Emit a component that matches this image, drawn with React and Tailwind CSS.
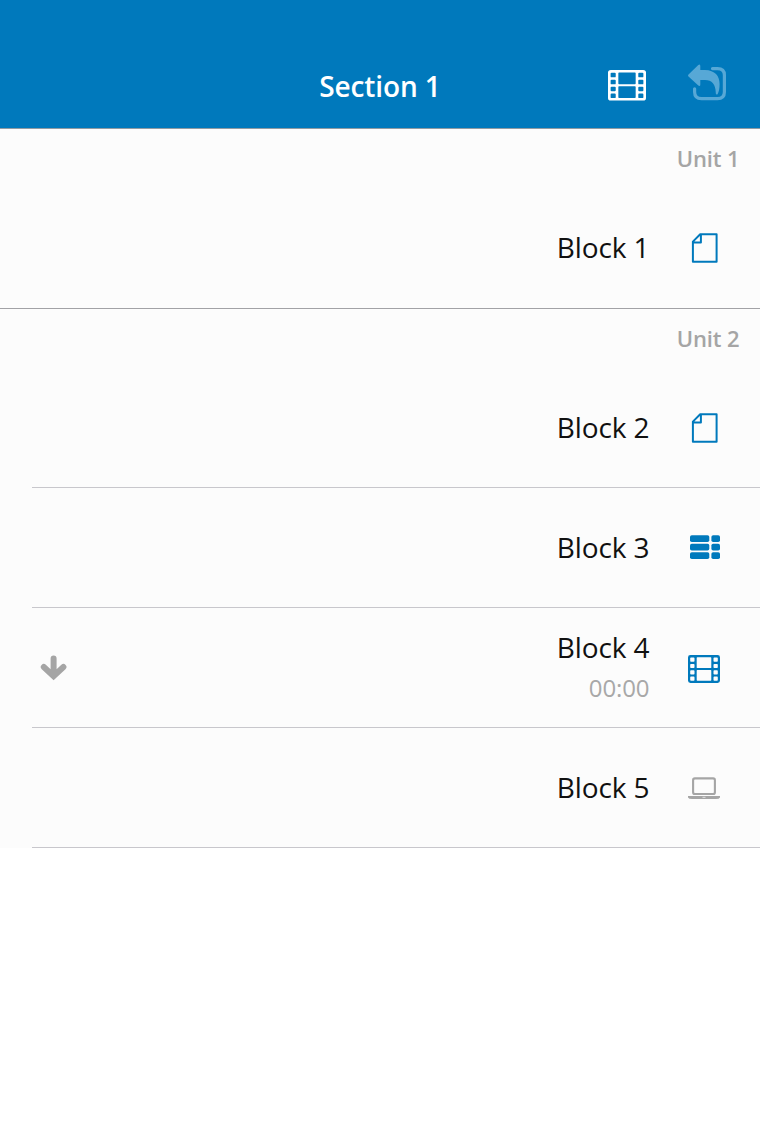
function rr(x, y, w, h, r) {
  return `M${x + r} ${y}h${w - 2 * r}a${r} ${r} 0 0 1 ${r} ${r}v${h - 2 * r}a${r} ${r} 0 0 1 ${-r} ${r}h${-(w - 2 * r)}a${r} ${r} 0 0 1 ${-r} ${-r}v${-(h - 2 * r)}a${r} ${r} 0 0 1 ${r} ${-r}z`;
}

const FILM = [
  rr(0, 0, 32, 28, 2.4),
  ...[2.5, 8.9, 15.3, 21.6].flatMap((y) => [rr(2.2, y, 4.3, 4.2, 0.8), rr(25.5, y, 4.3, 4.2, 0.8)]),
  rr(8.7, 2.3, 14.6, 10.7, 0.6),
  rr(8.7, 15, 14.6, 10.7, 0.6),
].join("");

function Film({ className }) {
  return (
    <svg className={className} viewBox="0 0 32 28" preserveAspectRatio="none" fill="currentColor">
      <path fillRule="evenodd" d={FILM} />
    </svg>
  );
}

function Back() {
  return (
    <svg className="h-[37px] w-10 text-[#57a8d6]" viewBox="0 0 40 37" fill="currentColor">
      <path
        d="M24.5 4.6H29.5Q36.4 4.6 36.4 11V28Q36.4 34.6 29.5 34.6H13.5Q6.6 34.6 6.6 28V24.8"
        fill="none"
        stroke="currentColor"
        strokeWidth="3.2"
        strokeLinecap="round"
      />
      <path d="M0.5 10.6L10.3 0.9Q12.3 -0.4 12.3 2V6H17C27 6.2 31.6 12 31.6 20C31.6 24.5 31 27.5 29.6 30.2Q27.6 31.2 27.8 29C27.6 20 24 16 17 16H12.3V20.4Q12.3 22.8 10.3 21.5L0.5 12.6Q-0.4 11.6 0.5 10.6Z" />
    </svg>
  );
}

function Page() {
  return (
    <svg className="mr-0.5 h-[30px] w-[27px]" viewBox="0 0 27 30" fill="none" stroke="#0079bc" strokeWidth="2" strokeLinejoin="round">
      <path d="M9.2 1.3H25.6V28.7H1.9V8.6ZM9.9 1.3V9.5H1.9" />
    </svg>
  );
}

function Grid() {
  return (
    <svg className="-mt-px h-6 w-[30px]" viewBox="0 0 30 24" fill="#0079bc">
      {[0.2, 8.7, 17.2].map((y) => (
        <g key={y}>
          <rect x="0" y={y} width="19.3" height="6.8" rx="1.8" />
          <rect x="21.4" y={y} width="8.6" height="6.8" rx="1.8" />
        </g>
      ))}
    </svg>
  );
}

function Laptop() {
  return (
    <svg className="mt-px h-[22px] w-8 text-[#a5a5a5]" viewBox="0 0 32 22" fill="currentColor">
      <rect x="5.1" y="1.4" width="21.8" height="15.6" rx="1.8" fill="none" stroke="currentColor" strokeWidth="2.1" />
      <path d="M0 19H32V20.4Q31.2 22 28 22H4Q0.8 22 0 20.4Z" />
      <path d="M14.5 20.3H17.5" stroke="#fcfcfc" strokeWidth="0.7" />
    </svg>
  );
}

function Down() {
  return (
    <svg className="mt-px h-[26px] w-[27px]" viewBox="0 0 27 26" fill="none" stroke="#a5a5a5" strokeWidth="6" strokeLinecap="round">
      <path d="M13.6 3.5V20M3.8 12L13.6 21.2L23.4 12" />
    </svg>
  );
}

function Unit({ name, children }) {
  return (
    <section>
      <h2 className="flex h-[60px] items-center justify-end pr-[20.5px] text-[22px] leading-[30px] font-semibold tracking-[-0.1px] text-[#a5a5a5]">{name}</h2>
      {children}
    </section>
  );
}

function Block({ name, time, icon, download, last }) {
  return (
    <div className="pl-8">
      <div className={`flex h-[120px] items-center border-b pr-10 pl-2 ${last ? "border-transparent" : "border-[#c8c7cc]"}`}>
        {download && <Down />}
        <div className={`ml-auto text-right text-[28px] tracking-[-0.1px] text-[#111] ${time ? "pb-px" : "pb-0.5"}`}>
          <div className="leading-10">{name}</div>
          {time && <div className="pt-px text-[24px] leading-[39px] text-[#a8a8a8]">{time}</div>}
        </div>
        <div className="ml-[38.5px] flex w-8 justify-end">{icon}</div>
      </div>
    </div>
  );
}

export default function App() {
  return (
    <div className="min-h-[1136px] w-[760px] bg-white font-['Open_Sans','Noto_Sans',sans-serif]">
      <header className="grid h-[129px] grid-cols-[1fr_auto_1fr] border-b border-[#8f9ba3] bg-[#0079bc] pt-11 text-white">
        <div />
        <h1 className="flex h-[83px] items-center text-[28px] leading-[38px] font-semibold tracking-[-0.1px]">Section 1</h1>
        <div className="flex h-[84px] items-start justify-end pr-8">
          <Film className="mt-[26px] mr-[42px] h-[30.5px] w-[38px]" />
          <div className="mt-5">
            <Back />
          </div>
        </div>
      </header>
      <main className="-mt-px bg-[#fcfcfc] bg-clip-content pt-px">
        <div className="-mt-px h-[181px] border-b border-[#a2a2a6]">
          <Unit name="Unit 1">
            <Block name="Block 1" icon={<Page />} last />
          </Unit>
        </div>
        <div className="-mt-px">
          <Unit name="Unit 2">
            <Block name="Block 2" icon={<Page />} />
            <Block name="Block 3" icon={<Grid />} />
            <Block name="Block 4" time="00:00" icon={<Film className="mt-0.5 h-7 w-8 text-[#0079bc]" />} download />
            <Block name="Block 5" icon={<Laptop />} />
          </Unit>
        </div>
      </main>
    </div>
  );
}
